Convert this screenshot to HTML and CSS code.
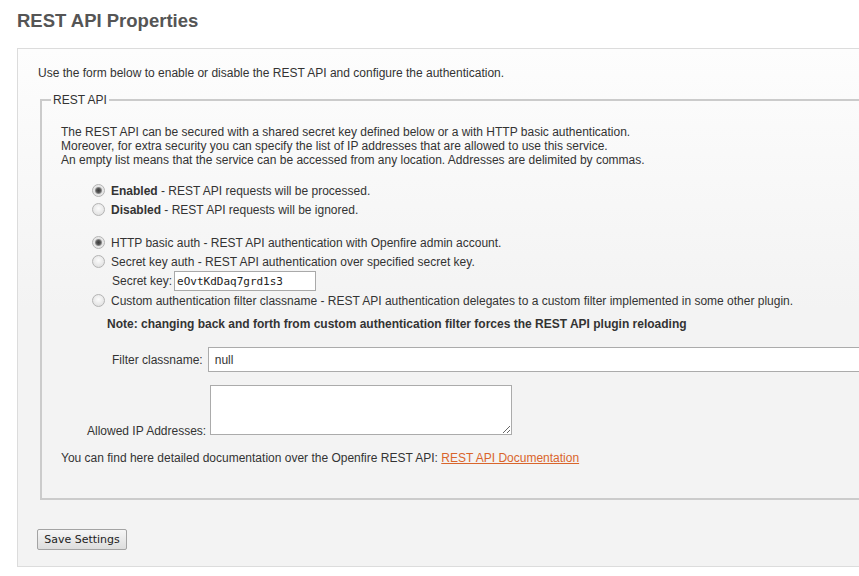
FILE: index.html
```html
<!DOCTYPE html>
<html lang="en">
<head>
    <meta charset="UTF-8">
    <meta name="viewport" content="width=device-width, initial-scale=1.0">
    <title>REST API Properties</title>
    <link rel="stylesheet" href="styles.css">
</head>
<body>
    <h1 class="page-title">REST API Properties</h1>

    <div class="content-box">
        <p class="intro">Use the form below to enable or disable the REST API and configure the authentication.</p>

        <form>
            <fieldset class="api-set">
                <legend>REST API</legend>

                <p class="info">
                    The REST API can be secured with a shared secret key defined below or a with HTTP basic authentication.<br>
                    Moreover, for extra security you can specify the list of IP addresses that are allowed to use this service.<br>
                    An empty list means that the service can be accessed from any location. Addresses are delimited by commas.
                </p>

                <div class="choices">
                    <label class="choice"><input type="radio" class="radio" name="enabled" checked><b>Enabled</b>&nbsp;- REST API requests will be processed.</label>
                    <label class="choice"><input type="radio" class="radio" name="enabled"><b>Disabled</b>&nbsp;- REST API requests will be ignored.</label>
                </div>

                <div class="choices auth">
                    <label class="choice"><input type="radio" class="radio" name="auth" checked>HTTP basic auth - REST API authentication with Openfire admin account.</label>
                    <label class="choice"><input type="radio" class="radio" name="auth">Secret key auth - REST API authentication over specified secret key.</label>
                    <div class="secret-row">
                        <label for="secret">Secret key:</label>
                        <input type="text" id="secret" class="secret-input" value="eOvtKdDaq7grd1s3">
                    </div>
                    <label class="choice"><input type="radio" class="radio" name="auth">Custom authentication filter classname - REST API authentication delegates to a custom filter implemented in some other plugin.</label>
                </div>

                <p class="note">Note: changing back and forth from custom authentication filter forces the REST API plugin reloading</p>

                <div class="filter-row">
                    <label for="filter">Filter classname:</label>
                    <input type="text" id="filter" class="filter-input" value="null">
                </div>

                <div class="ip-row">
                    <label for="ips">Allowed IP Addresses:</label>
                    <textarea id="ips" class="ip-input"></textarea>
                </div>

                <p class="docs">You can find here detailed documentation over the Openfire REST API: <a href="#">REST API Documentation</a></p>
            </fieldset>

            <input type="button" class="save-button" value="Save Settings">
        </form>
    </div>
</body>
</html>
```

FILE: styles.css
```css
body {
    font-family: "Liberation Sans", Arial, sans-serif;
    font-size: 12px;
    line-height: 14px;
    color: #333;
    background-color: #fff;
    margin: 0;
    padding: 0 0 0 17px;
    overflow: hidden;
}
.page-title {
    font-size: 18.5px;
    line-height: 22px;
    color: #555;
    margin: 0 0 16px;
    padding-top: 10px;
}
.content-box {
    width: 900px;
    border: 1px solid #dcdcdc;
    background: linear-gradient(to bottom, #fdfdfd 0, #f3f3f3 260px, #f3f3f3 100%);
    padding: 17px 20px 16px 20px;
}
.intro {
    margin: 0;
}
form {
    margin: 0;
}
.api-set {
    margin: 13px 2px 0;
    border: 2px solid #cbcbcb;
    padding: 0 9px 33px;
}
.api-set legend {
    padding: 0 2px;
    line-height: 14px;
}
.info {
    margin: 18px 0 0 10px;
}
.choices {
    margin: 14px 0 0 41px;
}
.choices.auth {
    margin-top: 14px;
}
.choice {
    display: flex;
    align-items: center;
    height: 19px;
    white-space: nowrap;
}
.radio {
    appearance: none;
    -webkit-appearance: none;
    width: 13px;
    height: 13px;
    margin: 0 6px 0 0;
    border: 1px solid #b4b4b4;
    border-radius: 50%;
    background: radial-gradient(circle at 50% 40%, #fcfcfc 0, #e4e4e4 70%, #d6d6d6 100%);
    flex-shrink: 0;
}
.radio:checked {
    background: radial-gradient(circle at 50% 50%, #3c3c3c 0, #555 2px, #8a8a8a 3px, #e4e4e4 4px, #f2f2f2 100%);
}
.secret-row {
    display: flex;
    align-items: center;
    height: 20px;
    padding-left: 20px;
}
.secret-input {
    box-sizing: border-box;
    width: 142px;
    height: 20px;
    margin: 0 0 0 2px;
    padding: 0 2px;
    border: 1px solid #a9a9a9;
    font-family: "DejaVu Sans Mono", monospace;
    font-size: 11px;
    color: #222;
}
.note {
    margin: 7px 0 0 56px;
    font-weight: bold;
}
.filter-row {
    display: flex;
    align-items: center;
    margin: 16px 0 0 61px;
}
.filter-input {
    box-sizing: border-box;
    width: 680px;
    height: 25px;
    margin: 0 0 0 5px;
    padding: 0 6px;
    border: 1px solid #ababab;
    font-family: "Liberation Sans", Arial, sans-serif;
    font-size: 12px;
    color: #333;
}
.ip-row {
    display: flex;
    align-items: flex-end;
    margin: 13px 0 0 36px;
}
.ip-row label {
    margin-bottom: -3px;
}
.ip-input {
    box-sizing: border-box;
    width: 302px;
    height: 50px;
    margin: 0 0 0 4px;
    border: 1px solid #ababab;
    display: block;
}
.docs {
    margin: 16px 0 0 10px;
}
.docs a {
    color: #d9652b;
    text-decoration: underline;
}
.save-button {
    display: block;
    box-sizing: border-box;
    width: 90px;
    height: 21px;
    margin: 29px 0 0 -1px;
    padding: 0;
    border: 1px solid #a3a3a3;
    border-radius: 2px;
    background: linear-gradient(to bottom, #f6f6f6, #dddddd);
    font-family: "DejaVu Sans", Tahoma, sans-serif;
    font-size: 11px;
    color: #222;
}
```
